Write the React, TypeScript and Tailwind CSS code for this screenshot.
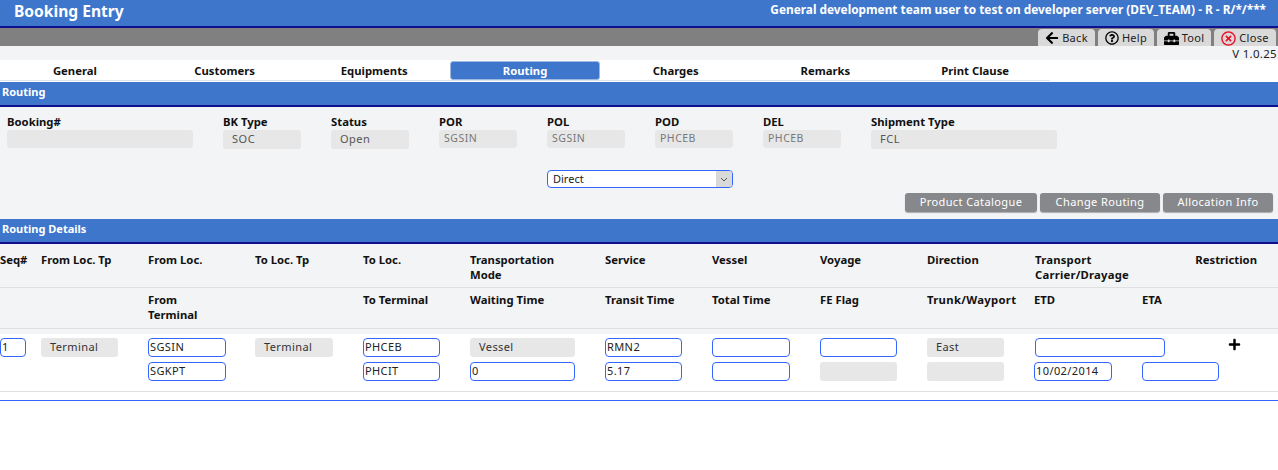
import { FaArrowLeft, FaPlus, FaRegQuestionCircle, FaRegTimesCircle, FaToolbox } from "react-icons/fa";

const font = "font-['Noto_Sans','DejaVu_Sans',sans-serif]";
const tabs = ["General", "Customers", "Equipments", "Routing", "Charges", "Remarks", "Print Clause"];

const SectionBar = ({ title }: { title: string }) => (
  <div className="flex h-[25px] items-center border-b-2 border-[#10108f] bg-[#3e76cc] pb-[3px] pl-[2px] text-[11px] font-bold text-white">
    {title}
  </div>
);

const ToolButton = ({ icon, label, w }: { icon: React.ReactNode; label: string; w: string }) => (
  <div className={`flex h-[17px] items-center justify-center gap-[3px] self-end rounded-t-[4px] bg-[#d9d9d9] pt-[1px] text-[11px] tracking-[0.3px] text-[#222] ${w}`}>
    {icon}
    <span>{label}</span>
  </div>
);

const Field = ({ label, value, w, h = "h-[18px]", mono }: { label: string; value?: string; w: string; h?: string; mono?: boolean }) => (
  <div className={`flex flex-col ${w}`}>
    <div className="h-[16px] text-[11.3px] leading-[16px] font-bold text-[#111]">{label}</div>
    <div
      className={`flex items-center rounded-[3px] bg-[#e7e7e7] tracking-[0.5px] ${h} ${mono ? "pl-[5px] text-[10.5px] text-[#777]" : "pl-[9px] text-[11px] text-[#555]"}`}
    >
      {value}
    </div>
  </div>
);

const Input = ({ value, w = "w-[78px]" }: { value?: string; w?: string }) => (
  <div className={`flex h-[19px] items-center rounded-[4px] border border-[#3366ff] bg-white pl-[1px] text-[11px] tracking-[0.4px] text-[#222] ${w}`}>
    {value}
  </div>
);

const ReadOnly = ({ value, w = "w-[78px]" }: { value?: string; w?: string }) => (
  <div className={`flex h-[19px] items-center rounded-[3px] bg-[#e7e7e7] pl-[9px] text-[11px] tracking-[0.4px] text-[#333] ${w}`}>
    {value}
  </div>
);

const GreyButton = ({ label, w }: { label: string; w: string }) => (
  <div className={`flex h-[19px] items-center justify-center rounded-[3px] bg-[#87888b] text-[11px] tracking-[0.4px] text-white shadow-[0_1px_1px_rgba(0,0,0,0.3)] ${w}`}>
    {label}
  </div>
);

const columns = "grid grid-cols-[41px_107px_107px_108px_107px_135px_107px_108px_107px_107px_108px_136px]";
const headText = "text-[11.3px] leading-[15px] font-bold text-[#111]";

export default function App() {
  return (
    <div className={`flex h-[470px] w-[1278px] flex-col overflow-hidden bg-white ${font}`}>
      <div className="flex h-[28px] items-start justify-between border-b-2 border-[#10108f] bg-[#3e76cc] text-white">
        <div className="pl-[14px] text-[15.6px] leading-[22px] font-bold">Booking Entry</div>
        <div className="pt-[1px] pr-[12px] text-[11.85px] font-bold">
          General development team user to test on developer server (DEV_TEAM) - R - R/*/***
        </div>
      </div>

      <div className="flex h-[18px] justify-end gap-[3px] bg-[#808080] pr-[2px]">
        <ToolButton w="w-[57px]" label="Back" icon={<FaArrowLeft className="text-[14px] text-black" />} />
        <ToolButton w="w-[56px]" label="Help" icon={<FaRegQuestionCircle className="text-[14px] text-black" />} />
        <ToolButton w="w-[54px]" label="Tool" icon={<FaToolbox className="text-[15px] text-black" />} />
        <ToolButton w="w-[62px]" label="Close" icon={<FaRegTimesCircle className="text-[15px] text-[#e8102a]" />} />
      </div>

      <div className="flex h-[14px] justify-end bg-[#f3f4f6] pr-[1px] text-[11.5px] leading-[15px] tracking-[0.3px] text-[#222]">V 1.0.25</div>

      <div className="flex h-[22px] items-start bg-white">
        <div className="flex h-[21px] w-[1050px] items-end border-b border-[#dfe3ea]">
          {tabs.map((t) => (
            <div
              key={t}
              className={`flex h-[19px] w-[150px] items-center justify-center pt-[1px] text-[11.3px] font-bold ${
                t === "Routing" ? "mx-[1px] rounded-[3px] border border-[#9db8e2] bg-[#3e76cc] text-white" : "text-[#111]"
              }`}
            >
              {t}
            </div>
          ))}
        </div>
      </div>

      <SectionBar title="Routing" />

      <div className="flex h-[112px] flex-col bg-[#f3f4f6]">
        <div className="flex pt-[7px] pl-[7px]">
          <Field label="Booking#" w="w-[186px] mr-[30px]" />
          <Field label="BK Type" value="SOC" w="w-[78px] mr-[30px]" h="h-[19px]" />
          <Field label="Status" value="Open" w="w-[78px] mr-[30px]" h="h-[19px]" />
          <Field label="POR" value="SGSIN" w="w-[78px] mr-[30px]" mono />
          <Field label="POL" value="SGSIN" w="w-[78px] mr-[30px]" mono />
          <Field label="POD" value="PHCEB" w="w-[78px] mr-[30px]" mono />
          <Field label="DEL" value="PHCEB" w="w-[78px] mr-[30px]" mono />
          <Field label="Shipment Type" value="FCL" w="w-[186px]" h="h-[19px]" />
        </div>

        <div className="mt-[21px] ml-[547px] flex h-[18px] w-[186px] items-center justify-between overflow-hidden rounded-[4px] border border-[#3366ff] bg-white pl-[5px] text-[11px] text-[#222]">
          <span>Direct</span>
          <span className="flex h-full w-[16px] items-center justify-center bg-[#d9d9d9]">
            <svg width="8" height="5" viewBox="0 0 8 5" fill="none" stroke="#555" strokeWidth="1">
              <path d="M1 1l3 3 3-3" />
            </svg>
          </span>
        </div>

        <div className="mt-[5px] flex justify-end gap-[3px] pr-[5px]">
          <GreyButton label="Product Catalogue" w="w-[132px]" />
          <GreyButton label="Change Routing" w="w-[120px]" />
          <GreyButton label="Allocation Info" w="w-[110px]" />
        </div>
      </div>

      <SectionBar title="Routing Details" />

      <div className="bg-[#f3f4f6]">
        <div className={`${columns} h-[44px] border-b border-[#e0e0e0] pt-[8px] ${headText}`}>
          <div>Seq#</div>
          <div>From Loc. Tp</div>
          <div>From Loc.</div>
          <div>To Loc. Tp</div>
          <div>To Loc.</div>
          <div className="w-[100px]">Transportation Mode</div>
          <div>Service</div>
          <div>Vessel</div>
          <div>Voyage</div>
          <div>Direction</div>
          <div className="w-[100px] pl-[1px] tracking-[0.2px]">Transport Carrier/Drayage</div>
          <div className="flex justify-end pr-[21px]">Restriction</div>
        </div>
        <div className={`${columns} h-[41px] border-b border-[#e0e0e0] pt-[4px] ${headText}`}>
          <div />
          <div />
          <div className="w-[60px]">From Terminal</div>
          <div />
          <div>To Terminal</div>
          <div>Waiting Time</div>
          <div>Transit Time</div>
          <div>Total Time</div>
          <div>FE Flag</div>
          <div className="tracking-[0.3px]">Trunk/Wayport</div>
          <div>ETD</div>
          <div>ETA</div>
        </div>
      </div>

      <div className="h-[5px] bg-[#f3f4f6]" />

      <div className={`${columns} h-[58px] grid-rows-[19px_19px] gap-y-[5px] border-b border-[#e0e0e0] pt-[4px]`}>
        <Input value="1" w="w-[26px]" />
        <ReadOnly value="Terminal" w="w-[77px]" />
        <Input value="SGSIN" />
        <ReadOnly value="Terminal" />
        <Input value="PHCEB" w="w-[77px]" />
        <ReadOnly value="Vessel" w="w-[105px]" />
        <Input value="RMN2" w="w-[77px]" />
        <Input />
        <Input w="w-[77px]" />
        <ReadOnly value="East" w="w-[77px]" />
        <div className="pl-[1px]">
          <Input w="w-[130px]" />
        </div>
        <div className="flex justify-end pr-[37px] text-[13px] text-black">
          <FaPlus />
        </div>

        <div />
        <div />
        <Input value="SGKPT" />
        <div />
        <Input value="PHCIT" w="w-[77px]" />
        <Input value="0" w="w-[105px]" />
        <Input value="5.17" w="w-[77px]" />
        <Input />
        <ReadOnly w="w-[77px]" />
        <ReadOnly w="w-[77px]" />
        <Input value="10/02/2014" w="w-[78px]" />
        <Input w="w-[77px]" />
      </div>

      <div className="mt-[8px] h-px bg-[#3366ff]" />
    </div>
  );
}
